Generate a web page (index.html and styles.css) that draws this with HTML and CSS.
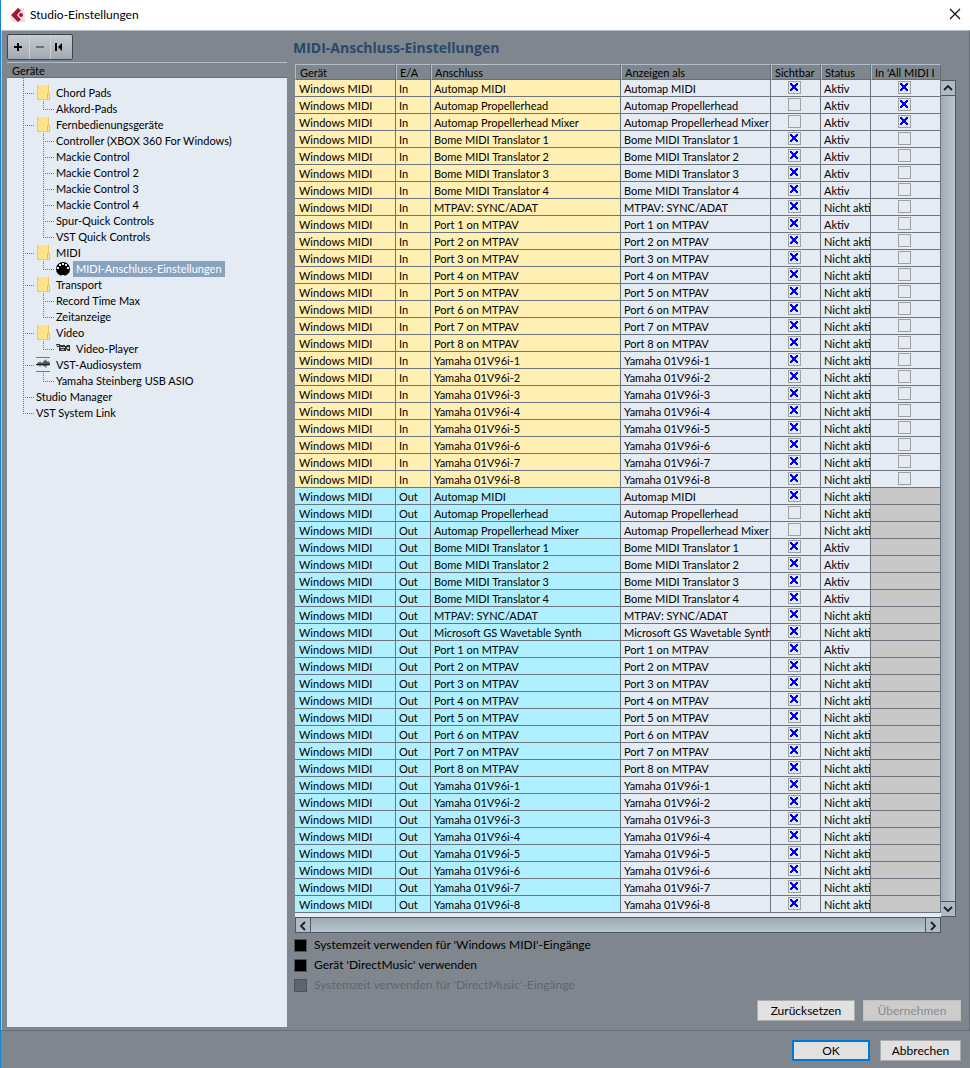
FILE: index.html
```html
<!DOCTYPE html>
<html lang="de">
<head>
<meta charset="utf-8">
<title>Studio-Einstellungen</title>
<link rel="stylesheet" href="styles.css">
</head>
<body>
<div class="window">
  <header class="titlebar">
    <svg class="logo" width="16" height="16" viewBox="0 0 16 16" aria-hidden="true">
      <path d="M7 1h7l1 14H3l-3-4z" fill="#e3e1e2"/>
      <path d="M1 8 8 1l3 2.500-2.500 2.500L7 8l1.500 2 2.500 2.500L8 15z" fill="#a9142f"/>
      <circle cx="11" cy="8" r="2" fill="#b01634"/>
    </svg>
    <h1 class="window-title">Studio-Einstellungen</h1>
    <button class="close" type="button" aria-label="Schließen">
      <svg width="12" height="12" viewBox="0 0 12 12"><path d="M1 1l10 10M11 1 1 11" stroke="#111" stroke-width="1.2"/></svg>
    </button>
  </header>

  <main class="content">
    <aside class="sidebar">
      <div class="toolbar">
        <button type="button" aria-label="Hinzufügen"><svg width="22" height="22" viewBox="0 0 22 22"><path d="M6 11h8M10 7v8" stroke="#000" stroke-width="2"/></svg></button>
        <button type="button" aria-label="Entfernen"><svg width="22" height="22" viewBox="0 0 22 22"><path d="M6 11h8" stroke="#6b6f75" stroke-width="2"/></svg></button>
        <button type="button" aria-label="Zurück zum Anfang"><svg width="22" height="22" viewBox="0 0 22 22"><path d="M4 7h2v8H4zM11 7v8l-4-4z"/></svg></button>
      </div>
      <h2 class="tree-head">Geräte</h2>
      <ul class="tree" id="tree"></ul>
    </aside>

    <section class="panel">
      <h2 class="panel-title">MIDI-Anschluss-Einstellungen</h2>
      <div class="grid-area">
        <table class="ports">
          <colgroup>
            <col class="c-device"><col class="c-io"><col class="c-port"><col class="c-name"><col class="c-flag"><col class="c-flag"><col class="c-all">
          </colgroup>
          <thead>
            <tr><th>Gerät</th><th>E/A</th><th>Anschluss</th><th>Anzeigen als</th><th>Sichtbar</th><th>Status</th><th>In 'All MIDI I</th></tr>
          </thead>
          <tbody id="ports"></tbody>
        </table>
        <div class="vscroll">
          <button type="button" aria-label="Nach oben"><svg width="13" height="14" viewBox="0 0 13 14"><path d="M3 9l4-4 4 4" fill="none" stroke="#17202a" stroke-width="1.8"/></svg></button>
          <span class="thumb"></span>
          <button type="button" aria-label="Nach unten"><svg width="13" height="14" viewBox="0 0 13 14"><path d="M3 5l4 4 4-4" fill="none" stroke="#17202a" stroke-width="1.8"/></svg></button>
        </div>
        <div class="hscroll">
          <button type="button" aria-label="Nach links"><svg width="14" height="13" viewBox="0 0 14 13"><path d="M9 3 5 7l4 4" fill="none" stroke="#17202a" stroke-width="1.8"/></svg></button>
          <span class="thumb"></span>
          <button type="button" aria-label="Nach rechts"><svg width="14" height="13" viewBox="0 0 14 13"><path d="M5 3l4 4-4 4" fill="none" stroke="#17202a" stroke-width="1.8"/></svg></button>
        </div>
      </div>
      <div class="options">
        <label><input type="checkbox">Systemzeit verwenden für 'Windows MIDI'-Eingänge</label>
        <label><input type="checkbox">Gerät 'DirectMusic' verwenden</label>
        <label class="off"><input type="checkbox" disabled>Systemzeit verwenden für 'DirectMusic'-Eingänge</label>
      </div>
      <div class="actions">
        <button class="btn wide" type="button">Zurücksetzen</button>
        <button class="btn wide" type="button" disabled>Übernehmen</button>
      </div>
    </section>
  </main>

  <footer class="footer">
    <button class="btn ok" type="button">OK</button>
    <button class="btn cancel" type="button">Abbrechen</button>
  </footer>
</div>
<script src="app.js"></script>
</body>
</html>
```

FILE: styles.css
```css
* { box-sizing: border-box; }

body {
  margin: 0;
  background: #7f868d;
  color: #000;
  font: 11px/16px Lato, "Open Sans", "Noto Sans", sans-serif;
}

h1, h2 { margin: 0; font-weight: 400; }

button, input { font: inherit; margin: 0; }

button { padding: 0; border: 0; background: none; }

svg { display: block; }

.window {
  display: flex;
  flex-direction: column;
  min-height: 100vh;
  border-left: 1px solid #1883d7;
}

.titlebar {
  display: flex;
  align-items: center;
  height: 30px;
  padding: 0 9px;
  background: #fff;
}

.window-title { flex: 1; padding-left: 4px; font-size: 12px; }

.close { padding: 0 0 2px; }

.content {
  display: flex;
  flex: 1;
  gap: 6px;
  padding: 3px 13px 3px 5px;
  border: solid #b3c0cc;
  border-width: 1px 0 0 1px;
  border-right: 1px solid #666e78;
}

.sidebar { display: flex; flex-direction: column; width: 280px; }

.toolbar {
  display: flex;
  align-self: flex-start;
  height: 26px;
  margin-bottom: 2px;
  border: 1px solid #3f454c;
  border-radius: 2px;
  background: linear-gradient(#c6cbd0, #a3a9b0);
}

.toolbar button { width: 21px; overflow: hidden; }
.toolbar button + button { border-left: 1px solid #cdd2d7; width: 21px; }
.toolbar button:last-child { width: 22px; }

.tree-head {
  height: 16px;
  padding-left: 5px;
  border-top: 1px solid #b3bfcd;
  border-bottom: 1px solid #666e78;
  font-size: 11px;
  line-height: 16px;
}

.tree {
  --dots-v: repeating-linear-gradient(#70767e 0 1px, transparent 1px 2px);
  --dots-h: repeating-linear-gradient(90deg, #70767e 0 1px, transparent 1px 2px);
  flex: 1;
  margin: 0;
  padding: 7px 0 0 16px;
  list-style: none;
  background: var(--dots-v) 16px 0 / 1px 7px no-repeat, #e4ebf3;
}

.tree li { display: flex; height: 16px; white-space: nowrap; }

.guide {
  width: 13px;
  background: var(--dots-v) 0 0 / 1px 100% no-repeat, var(--dots-h) 0 8px / 11px 1px no-repeat;
}

.guide.through { width: 20px; background: var(--dots-v) 0 0 / 1px 100% no-repeat; }
.guide.last { background: var(--dots-v) 0 0 / 1px 8px no-repeat, var(--dots-h) 0 8px / 11px 1px no-repeat; }

.icon { width: 20px; }
.icon-leaf { width: 17px; }
.leaf-label { padding: 0 3px; }
.selected { background: #88a3c0; color: #fff; }

.panel { flex: 1; min-width: 0; }

.panel-title {
  padding: 5px 0 8px;
  color: #28486b;
  font-family: "Open Sans", "Noto Sans", sans-serif;
  font-size: 14px;
  font-weight: 700;
  line-height: 17px;
}

.grid-area {
  display: grid;
  grid-template-columns: minmax(0, 1fr) 15px;
  padding-left: 2px;
}

.ports {
  width: 100%;
  border-spacing: 0;
  table-layout: fixed;
  border-bottom: 4px solid #e4ebf3;
}

.c-device { width: 101px; }
.c-io { width: 35px; }
.c-name { width: 150px; }
.c-flag { width: 50px; }
.c-all { width: 70px; }

.ports th {
  height: 16px;
  padding: 2px 0 0 3px;
  border: 1px solid #b3bfcd;
  border-right-color: #666e78;
  border-bottom-color: #666e78;
  font-weight: 400;
  line-height: 12px;
  text-align: left;
  white-space: nowrap;
  overflow: hidden;
}

.ports td {
  height: 17px;
  padding: 2px 0 0 3px;
  border: solid #6c7480;
  border-width: 0 1px 1px 0;
  background: #e4ebf3;
  line-height: 14px;
  white-space: nowrap;
  overflow: hidden;
}

.ports td:first-child, .ports th:first-child { padding-left: 4px; }

.ports .in { background: #ffefb2; }
.ports .out { background: #b0f0fe; }
.ports .none { background: #c8c8c8; }
.ports .check { padding: 1px 3px 2px 0; }

.check input {
  appearance: none;
  display: block;
  width: 13px;
  height: 13px;
  margin: 0 auto;
  border: 1px solid #a0a0a0;
}

.check input:checked {
  background:
    linear-gradient(45deg, transparent 38%, #0000f0 38% 62%, transparent 62%) 1px 1px / 8px 8px no-repeat,
    linear-gradient(-45deg, transparent 38%, #0000f0 38% 62%, transparent 62%) 1px 1px / 8px 8px no-repeat;
}

.vscroll, .hscroll { display: flex; border: 1px solid #4e5864; background: #b0bac4; }

.vscroll { flex-direction: column; margin-top: 16px; border-left: 0; }
.vscroll .thumb { flex: 1; background: linear-gradient(90deg, #9faab5, #b9c5cf); border: solid #4e5864; border-width: 1px 0; }

.hscroll { height: 16px; }
.hscroll .thumb { flex: 1; background: linear-gradient(#9ea9b2, #b9c5cf); border: solid #4e5864; border-width: 0 1px; }

.options { padding-top: 2px; font-size: 12px; }
.options label { display: flex; align-items: center; height: 20px; }

.options input {
  appearance: none;
  width: 13px;
  height: 13px;
  margin: 0 7px 0 1px;
  border: 1px solid #4c535c;
  background: #000;
}

.options .off { color: #5c6773; }
.options .off input { background: #60656d; }

.actions { display: flex; justify-content: flex-end; gap: 8px; padding: 5px 0 3px; margin-right: -5px; }

.btn {
  height: 21px;
  border: 1px solid #adadad;
  background: #e1e1e1;
  font-size: 12px;
  line-height: 17px;
}

.btn:disabled { background: #cccccc; border-color: #bfbfbf; color: #8b8b8b; }
.wide { width: 98px; }
.ok { width: 78px; border: 2px solid #0078d7; }
.cancel { width: 81px; }

.footer {
  display: flex;
  justify-content: flex-end;
  gap: 10px;
  padding: 9px 9px 7px;
  border-top: 1px solid #666e78;
}
```

FILE: app.js
```js
const icons = {
  folder: '<svg class="icon" width="20" height="16" viewBox="0 0 20 16"><path d="M1.500-.500h11v15h-11z" fill="#ffe289" stroke="#efcb55"/><path d="M11.500 8.500h2v6h-2z" fill="#ffe9a5" stroke="#e9c244"/></svg>',
  audio: '<svg class="icon" width="20" height="16" viewBox="0 0 20 16"><path d="M0 .500h14M0 14.500h14" stroke="#777"/><path d="M0 7h1l1-2 1 1 1-2 1 2 1-1 1 1 1-3 1 1 1-2 1 3 1-1 2 2v1l-2 2-1-1-1 3-1-2-1 1-1-2-1 1-1-1-1 2-1-2-1 1-1-1-1-1z" fill="#555"/><path d="M0 7.500h14" stroke="#222"/></svg>',
  midi: '<svg class="icon-leaf" width="17" height="16" viewBox="0 0 17 16"><circle cx="7" cy="8" r="7"/><g fill="#e4ebf3"><path d="M1 6h2v2H1zM3 3h2v2H3zM6 2h2v2H6zM9 3h2v2H9zM11 6h2v2h-2zM5.500 14h3v1h-3z"/></g></svg>',
  camera: '<svg class="icon-leaf" width="17" height="16" viewBox="0 0 17 16"><path d="M0 3h4v1h5v1h1l1-1h3v6h-2l-2-2v2H3V6H1z" fill="#333"/><path d="M4 6h5v1H4zM5 8h3v1H5zM11 6h2v2h-2zM1 4h2v1H1z" fill="#c9cdd2"/></svg>'
};

const tree = [
  ['Chord Pads', 'folder', ['Akkord-Pads']],
  ['Fernbedienungsgeräte', 'folder', ['Controller (XBOX 360 For Windows)', 'Mackie Control', 'Mackie Control 2', 'Mackie Control 3', 'Mackie Control 4', 'Spur-Quick Controls', 'VST Quick Controls']],
  ['MIDI', 'folder', ['MIDI-Anschluss-Einstellungen']],
  ['Transport', 'folder', ['Record Time Max', 'Zeitanzeige']],
  ['Video', 'folder', ['Video-Player']],
  ['VST-Audiosystem', 'audio', ['Yamaha Steinberg USB ASIO']],
  ['Studio Manager', null, []],
  ['VST System Link', null, []]
];
const leafIcons = { 'MIDI-Anschluss-Einstellungen': 'midi', 'Video-Player': 'camera' };

let items = '';
tree.forEach(([name, icon, children], i) => {
  items += `<li><span class="guide${i === tree.length - 1 ? ' last' : ''}"></span>${icon ? icons[icon] : ''}<span>${name}</span></li>`;
  children.forEach((child, j) => {
    const leaf = leafIcons[child];
    const cls = (leaf ? 'leaf-label' : '') + (leaf === 'midi' ? ' selected' : '');
    items += `<li><span class="guide through"></span><span class="guide${j === children.length - 1 ? ' last' : ''}"></span>${leaf ? icons[leaf] : ''}<span class="${cls}">${child}</span></li>`;
  });
});
document.getElementById('tree').innerHTML = items;

const numbered = (count, make) => Array.from({ length: count }, (_, i) => make(i + 1));
const automap = ['Automap MIDI', 'Automap Propellerhead', 'Automap Propellerhead Mixer'];
const bome = numbered(4, n => `Bome MIDI Translator ${n}`);
const mtpav = numbered(8, n => `Port ${n} on MTPAV`);
const yamaha = numbered(8, n => `Yamaha 01V96i-${n}`);
const inputs = [...automap, ...bome, 'MTPAV: SYNC/ADAT', ...mtpav, ...yamaha];
const outputs = [...automap, ...bome, 'MTPAV: SYNC/ADAT', 'Microsoft GS Wavetable Synth', ...mtpav, ...yamaha];

const box = (on, label) => `<td class="check"><input type="checkbox" aria-label="${label}"${on ? ' checked' : ''}></td>`;

function row(name, io) {
  const isAutomap = automap.includes(name);
  const active = bome.includes(name) || name === mtpav[0] || (isAutomap && io === 'In');
  const visible = !isAutomap || name === automap[0];
  const kind = io.toLowerCase();
  return `<tr><td class="${kind}">Windows MIDI</td><td class="${kind}">${io}</td><td class="${kind}">${name}</td><td>${name}</td>`
    + box(visible, `${name} sichtbar`)
    + `<td>${active ? 'Aktiv' : 'Nicht akti'}</td>`
    + (io === 'In' ? box(isAutomap, `${name} in All MIDI`) : '<td class="none"></td>')
    + '</tr>';
}

document.getElementById('ports').innerHTML =
  inputs.map(n => row(n, 'In')).join('') + outputs.map(n => row(n, 'Out')).join('');
```
